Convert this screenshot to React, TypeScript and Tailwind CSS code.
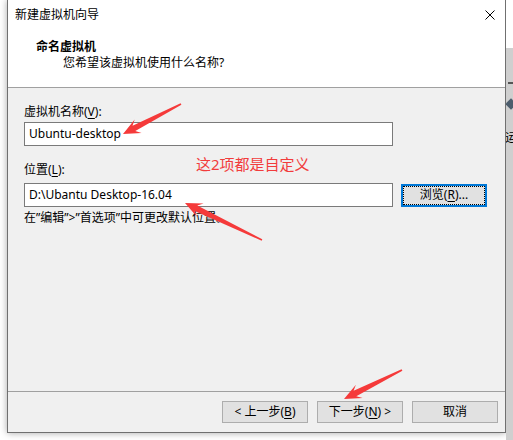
import React from "react";

type Pt = [number, number];

// red annotation arrow: thin tail widening into a triangular head
function arrowPoints(tail: Pt, tip: Pt, head = 17, half = 7.5, shaft = 3, tailW = 0.8) {
  const dx = tip[0] - tail[0];
  const dy = tip[1] - tail[1];
  const len = Math.hypot(dx, dy);
  const ux = dx / len;
  const uy = dy / len;
  const nx = -uy;
  const ny = ux;
  const at = (d: number, w: number): string =>
    `${(tip[0] - ux * d + nx * w).toFixed(1)},${(tip[1] - uy * d + ny * w).toFixed(1)}`;
  return [
    `${(tail[0] + nx * tailW).toFixed(1)},${(tail[1] + ny * tailW).toFixed(1)}`,
    at(head * 0.72, shaft),
    at(head, half),
    `${tip[0]},${tip[1]}`,
    at(head, -half),
    at(head * 0.72, -shaft),
    `${(tail[0] - nx * tailW).toFixed(1)},${(tail[1] - ny * tailW).toFixed(1)}`,
  ].join(" ");
}

const arrows: { tail: Pt; tip: Pt }[] = [
  { tail: [181, 104], tip: [123, 134] },
  { tail: [262, 240], tip: [185, 203] },
  { tail: [402, 370], tip: [344, 399] },
];

function Key({ k }: { k: string }) {
  return <span className="underline underline-offset-[2px]">{k}</span>;
}

function WinButton({ children }: { children: React.ReactNode }) {
  return (
    <div className="flex h-[22px] w-[86px] items-center justify-center border border-[#adadad] bg-[#e1e1e1] text-[12px] leading-none text-black">
      {children}
    </div>
  );
}

export default function App() {
  return (
    <div className="relative flex h-[440px] w-[513px] overflow-hidden bg-white font-[Noto_Sans,Noto_Sans_CJK_SC,sans-serif] text-[12px] text-black">
      <div className="w-[7px] shrink-0" />

      <div className="flex h-[433px] w-[499px] shrink-0 flex-col border-x border-b border-[#707070] bg-[#f0f0f0] shadow-[0_0_7px_rgba(0,0,0,0.35)]">
        <div className="h-[88px] border-b border-[#a0a0a0] bg-white">
          <div className="flex h-[30px] items-center justify-between pl-[7px] pr-[10px]">
            <span className="leading-4">新建虚拟机向导</span>
            <svg width="10" height="10" viewBox="0 0 10 10" className="mb-[1px]">
              <path d="M0.5 0.5L9.5 9.5M9.5 0.5L0.5 9.5" stroke="#000" strokeWidth="1" />
            </svg>
          </div>
          <div className="mt-[9px] pl-[28px] font-bold leading-4">命名虚拟机</div>
          <div className="pl-[55px] leading-4">您希望该虚拟机使用什么名称?</div>
        </div>

        <div className="flex flex-1 flex-col pl-[16px] pt-[16px]">
          <div className="leading-4">
            虚拟机名称(<Key k="V" />):
          </div>
          <div className="mt-[2px] flex h-[24px] w-[369px] items-center border border-[#7a7a7a] bg-white pl-[4px]">
            Ubuntu-desktop
          </div>
          <div className="mt-[16px] leading-4">
            位置(<Key k="L" />):
          </div>
          <div className="mt-[5px] flex items-center gap-[8px]">
            <div className="flex h-[24px] w-[369px] items-center border border-[#7a7a7a] bg-white pl-[4px]">
              D:\Ubantu Desktop-16.04
            </div>
            <div className="relative flex h-[23px] w-[86px] items-center justify-center border-2 border-[#0078d7] bg-[#e1e1e1] leading-none">
              <div className="absolute inset-0 border border-dotted border-black" />
              浏览(<Key k="R" />)...
            </div>
          </div>
          <div className="mt-[3px] leading-4">在”编辑”&gt;”首选项”中可更改默认位置。</div>
        </div>

        <div className="flex h-[41px] justify-end gap-[9px] border-t border-[#a0a0a0] pr-[7px] pt-[9px]">
          <WinButton>
            &lt; 上一步(<Key k="B" />)
          </WinButton>
          <WinButton>
            下一步(<Key k="N" />) &gt;
          </WinButton>
          <WinButton>取消</WinButton>
        </div>
      </div>

      <div className="flex w-[7px] shrink-0 flex-col">
        <div className="h-[48px] bg-white" />
        <div className="flex flex-1 flex-col overflow-hidden bg-[#cfcfcf]">
          <div className="mt-[34px] ml-[2px] h-[2px] w-[6px] bg-[#555]" />
          <div className="mt-[16px] ml-[1px] h-[8px] w-[8px] rotate-45 bg-[#4d5d6d]" />
          <div className="mt-[22px] -ml-[1px] whitespace-nowrap text-[12px] leading-4 text-black">运</div>
        </div>
      </div>

      <div className="absolute left-[196px] top-[155px] whitespace-nowrap text-[15px] leading-[18px] text-[#f23c3c]">
        这2项都是自定义
      </div>

      <svg className="pointer-events-none absolute inset-0" width="513" height="440">
        {arrows.map((a, i) => (
          <polygon key={i} points={arrowPoints(a.tail, a.tip)} fill="#f53a3a" />
        ))}
      </svg>
    </div>
  );
}
